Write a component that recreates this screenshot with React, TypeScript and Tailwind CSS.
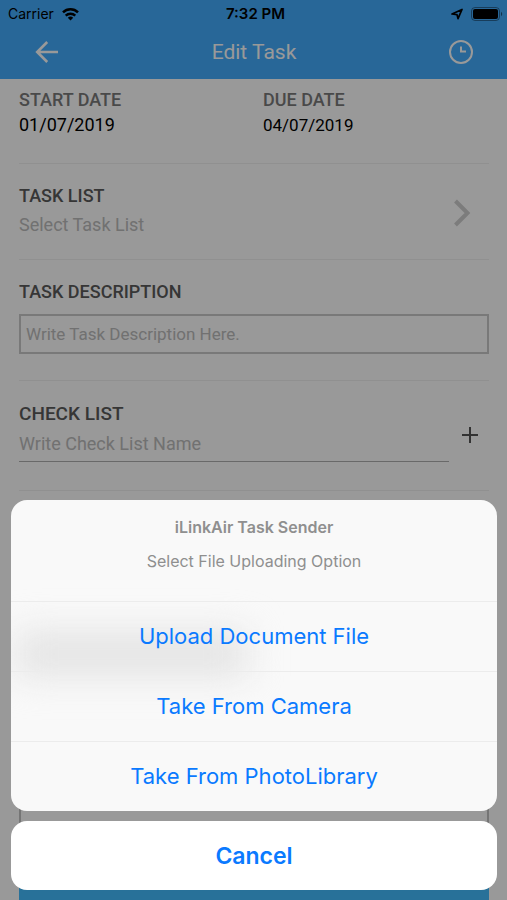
import type { ReactNode } from "react";

const label = "leading-6 font-medium text-[#5a5a5a]";
const dateLabel = "text-[18px] leading-6 font-medium text-[#7b7b7b]";

function StatusBar() {
  return (
    <div className="grid h-7 grid-cols-3 items-center pl-2 pr-1 font-['Inter',sans-serif] text-[14px] leading-5 text-black">
      <div className="flex items-center gap-2">
        <span>Carrier</span>
        <svg width="17" height="13" viewBox="0 0 17 13" fill="none" stroke="currentColor" aria-hidden="true">
          <path d="M1 4.4a10.8 10.8 0 0 1 15 0" strokeWidth="2.5" />
          <path d="M3.7 7.6a7 7 0 0 1 9.6 0" strokeWidth="2.4" />
          <path d="M8.5 12.6 5.8 9.8a4 4 0 0 1 5.4 0Z" fill="currentColor" stroke="none" />
        </svg>
      </div>
      <span className="text-center text-[15px] font-semibold">7:32 PM</span>
      <div className="flex items-center justify-end gap-2">
        <svg width="12" height="12" viewBox="0 0 12 12" fill="none" stroke="currentColor" strokeWidth="1.7" strokeLinejoin="round" aria-hidden="true">
          <path d="M1 6 11 1.4 7 10.6 6 6.6Z" />
        </svg>
        <svg width="32" height="14" viewBox="0 0 32 14" aria-hidden="true">
          <rect x="0.5" y="0.5" width="28" height="13" rx="3.5" fill="none" stroke="#000" strokeOpacity="0.4" />
          <rect x="2" y="2" width="25" height="10" rx="2" fill="#000" />
          <path d="M30 4.8c1.6.8 1.6 3.6 0 4.4Z" fill="#000" fillOpacity="0.5" />
        </svg>
      </div>
    </div>
  );
}

function NavBar() {
  return (
    <div className="flex h-[51px] items-center justify-between pr-[33px] pb-[3px] pl-[34px] text-white">
      <button type="button" aria-label="Back">
        <svg width="26" height="26" viewBox="0 0 26 26" fill="none" stroke="currentColor" strokeWidth="2.6" aria-hidden="true">
          <path d="M24 13H3.5M13.2 3l-10 10 10 10" />
        </svg>
      </button>
      <h1 className="text-[21px] leading-6">Edit Task</h1>
      <button type="button" aria-label="History">
        <svg width="26" height="26" viewBox="0 0 26 26" fill="none" stroke="currentColor" strokeWidth="2" aria-hidden="true">
          <circle cx="13" cy="13" r="11" />
          <path d="M13 7.5V12.5h5" />
        </svg>
      </button>
    </div>
  );
}

function Option({ children }: { children: ReactNode }) {
  return (
    <button
      type="button"
      className="relative h-[70px] w-full border-t border-[#ececec] pb-px text-[22px] leading-8 text-[#0a7aff]"
    >
      {children}
    </button>
  );
}

export default function App() {
  return (
    <div className="relative flex h-screen flex-col overflow-hidden bg-white font-['Roboto',sans-serif]">
      <header className="bg-[#43acfd]">
        <StatusBar />
        <NavBar />
      </header>

      <main className="flex flex-1 flex-col pr-[18px] pl-[19px]">
        <section className="grid grid-cols-[244px_1fr] border-b border-[#f0f0f0] pt-[9px] pb-[26px]">
          <div>
            <h2 className={dateLabel}>START DATE</h2>
            <p className="mt-px text-[18px] leading-6">01/07/2019</p>
          </div>
          <div>
            <h2 className={dateLabel}>DUE DATE</h2>
            <p className="mt-px text-[17px] leading-6">04/07/2019</p>
          </div>
        </section>

        <section className="border-b border-[#f0f0f0] pt-5 pb-[22px]">
          <button type="button" className="flex w-full items-end justify-between pr-[18px] text-left">
            <span>
              <span className={`block text-[18px] ${label}`}>TASK LIST</span>
              <span className="mt-[5px] block text-[18px] leading-6 text-[#bcbcbc]">Select Task List</span>
            </span>
            <svg className="mb-[10px]" width="18" height="28" viewBox="0 0 18 28" fill="none" stroke="#cfcfcf" strokeWidth="4" aria-hidden="true">
              <path d="M2.5 2 14.5 14 2.5 26" />
            </svg>
          </button>
        </section>

        <section className="border-b border-[#f0f0f0] pt-5 pb-[26px]">
          <label htmlFor="description" className={`block text-[18px] ${label}`}>
            TASK DESCRIPTION
          </label>
          <input
            id="description"
            placeholder="Write Task Description Here."
            className="mt-[10px] block h-10 w-full border-2 border-[#cacaca] bg-transparent px-[5px] text-[17px] leading-6 outline-none placeholder:text-[#bcbcbc]"
          />
        </section>

        <section className="flex items-center gap-3 border-b border-[#f0f0f0] pt-[21px] pb-7">
          <div className="flex-1 border-b border-[#b0b0b0] pb-[5px]">
            <label htmlFor="checklist" className={`block text-[19px] ${label}`}>
              CHECK LIST
            </label>
            <input
              id="checklist"
              placeholder="Write Check List Name"
              className="mt-[6px] block w-full bg-transparent text-[18px] leading-6 text-black outline-none placeholder:text-[#bcbcbc]"
            />
          </div>
          <button type="button" aria-label="Add check list" className="mr-[10px] pt-[6px]">
            <svg width="18" height="18" viewBox="0 0 18 18" fill="none" stroke="#555" strokeWidth="2" aria-hidden="true">
              <path d="M9 1v16M1 9h16" />
            </svg>
          </button>
        </section>

        <div className="mt-[240px] flex-1 border-x-2 border-[#c4c4c4]" />
        <div className="h-5 bg-[#43bcff]" />
      </main>

      <div className="absolute inset-0 bg-black/40" />

      <div
        role="dialog"
        aria-label="iLinkAir Task Sender"
        className="absolute right-[10px] bottom-[10px] left-[11px] flex flex-col gap-[10px] font-['Inter',sans-serif]"
      >
        <div className="relative overflow-hidden rounded-[16px] bg-[#f9f9f9]">
          <div className="absolute top-[132px] left-1 h-[44px] w-[232px] bg-[#e3e3e3] blur-[18px]" />
          <div className="relative h-[101px] pt-[15px] text-center text-[16px] leading-6 text-[#8f8f8f]">
            <h2 className="font-semibold">iLinkAir Task Sender</h2>
            <p className="mt-[10px]">Select File Uploading Option</p>
          </div>
          <Option>Upload Document File</Option>
          <Option>Take From Camera</Option>
          <Option>Take From PhotoLibrary</Option>
        </div>
        <button
          type="button"
          className="h-[69px] rounded-[16px] bg-white text-[23px] leading-8 font-semibold text-[#0a7aff]"
        >
          Cancel
        </button>
      </div>
    </div>
  );
}
